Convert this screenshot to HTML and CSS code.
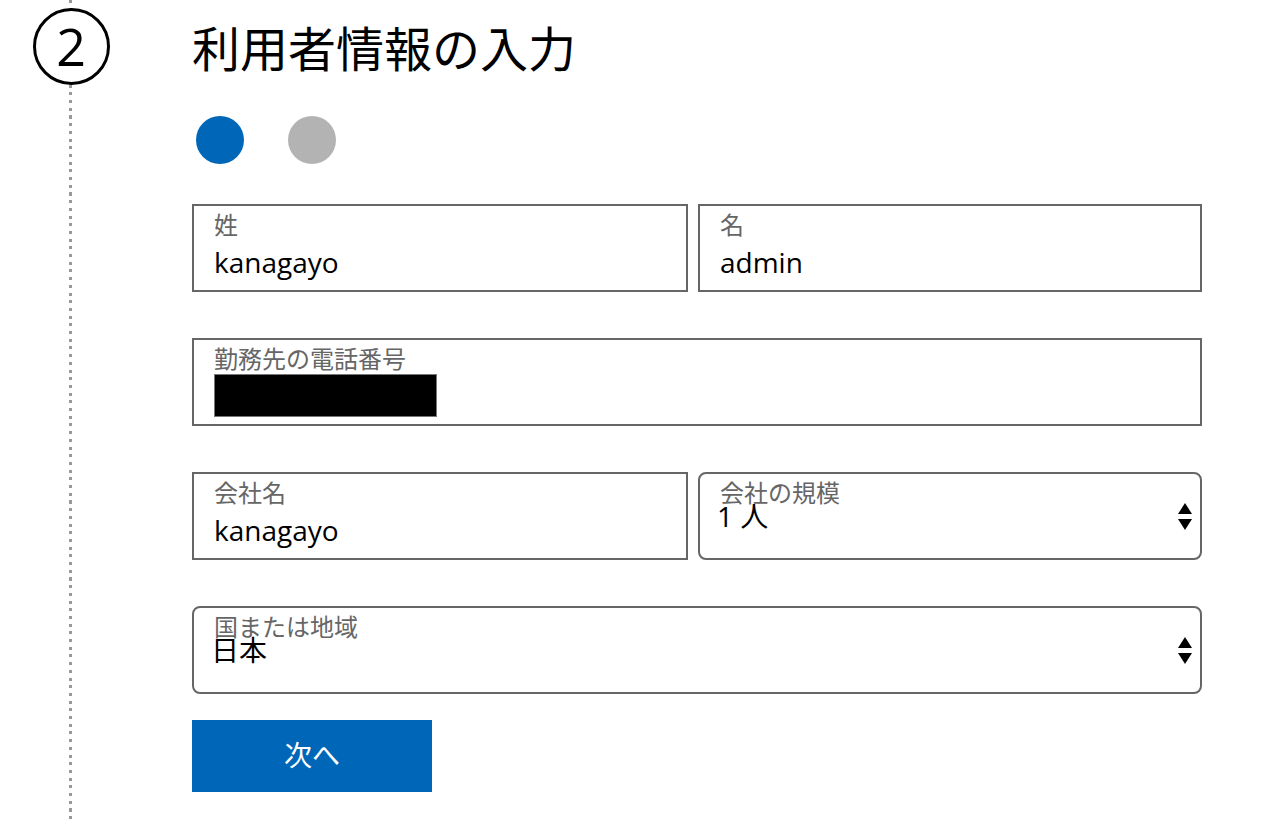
FILE: index.html
```html
<!DOCTYPE html>
<html lang="ja">
<head>
<meta charset="utf-8">
<title>利用者情報の入力</title>
<link rel="stylesheet" href="styles.css">
</head>
<body>
<div class="page">
  <div class="rail">
    <div class="step">2</div>
  </div>
  <main class="content">
    <h1 class="title">利用者情報の入力</h1>
    <div class="dots">
      <span class="dot dot-active"></span>
      <span class="dot"></span>
    </div>
    <form class="form">
      <div class="row row-split">
        <div class="field">
          <div class="label">姓</div>
          <div class="value">kanagayo</div>
        </div>
        <div class="field">
          <div class="label">名</div>
          <div class="value">admin</div>
        </div>
      </div>
      <div class="row">
        <div class="field">
          <div class="label">勤務先の電話番号</div>
          <div class="redacted"></div>
        </div>
      </div>
      <div class="row row-split">
        <div class="field">
          <div class="label">会社名</div>
          <div class="value">kanagayo</div>
        </div>
        <div class="field field-select">
          <div class="select-body">
            <div class="label">会社の規模</div>
            <div class="value select-value">1 人</div>
          </div>
          <svg class="spinner" width="14" height="27" viewBox="0 0 14 27" aria-hidden="true">
            <polygon points="0,11 7,0 14,11" fill="#000"/>
            <polygon points="0,16 14,16 7,27" fill="#000"/>
          </svg>
        </div>
      </div>
      <div class="row">
        <div class="field field-select">
          <div class="select-body">
            <div class="label">国または地域</div>
            <div class="value select-value">日本</div>
          </div>
          <svg class="spinner" width="14" height="27" viewBox="0 0 14 27" aria-hidden="true">
            <polygon points="0,11 7,0 14,11" fill="#000"/>
            <polygon points="0,16 14,16 7,27" fill="#000"/>
          </svg>
        </div>
      </div>
      <button type="button" class="next">次へ</button>
    </form>
  </main>
</div>
</body>
</html>
```

FILE: styles.css
```css
html, body {
  margin: 0;
  padding: 0;
  background: #fff;
}

body {
  font-family: "Open Sans", "Noto Sans CJK JP", sans-serif;
  color: #000;
  height: 822px;
  overflow: hidden;
}

.page {
  display: flex;
  min-height: 822px;
}

.rail {
  width: 142px;
  flex: none;
  padding-top: 8px;
  box-sizing: border-box;
  display: flex;
  flex-direction: column;
  align-items: center;
  background-image: repeating-linear-gradient(to bottom, #999 0 3px, transparent 3px 7.7px);
  background-size: 3px 100%;
  background-repeat: no-repeat;
  background-position: 69px 0;
}

.step {
  width: 77px;
  height: 77px;
  box-sizing: border-box;
  border: 3px solid #000;
  border-radius: 50%;
  background: #fff;
  display: flex;
  align-items: center;
  justify-content: center;
  font-size: 52px;
  line-height: 1;
  font-weight: 400;
  padding-bottom: 2px;
}

.content {
  margin-left: 50px;
  width: 1010px;
  padding-top: 18px;
}

.title {
  margin: 0;
  font-family: "Noto Sans CJK JP", sans-serif;
  font-size: 48px;
  line-height: 56px;
  font-weight: 400;
  letter-spacing: 0;
}

.dots {
  display: flex;
  gap: 44px;
  margin-top: 42px;
  padding-left: 4px;
}

.dot {
  width: 48px;
  height: 48px;
  border-radius: 50%;
  background: #b3b3b3;
}

.dot-active {
  background: #0067b8;
}

.form {
  margin-top: 40px;
  display: flex;
  flex-direction: column;
  gap: 46px;
}

.row {
  display: grid;
  grid-template-columns: 1fr;
}

.row-split {
  grid-template-columns: 496px 1fr;
  gap: 10px;
}

.field {
  height: 88px;
  box-sizing: border-box;
  border: 2px solid #666;
  padding: 4px 20px 0 20px;
}

.label {
  font-size: 24px;
  line-height: 30px;
  color: #666;
  white-space: nowrap;
}

.value {
  margin-top: 4px;
  font-size: 28px;
  line-height: 36px;
  color: #000;
}

.redacted {
  width: 223px;
  height: 43px;
  background: #000;
  border: 1px solid #777;
  box-sizing: border-box;
}

.field-select {
  border-radius: 8px;
  display: flex;
  align-items: flex-start;
  padding-right: 8px;
}

.select-body {
  flex: 1;
}

.select-value {
  margin-top: -10px;
  margin-left: -3px;
}

.spinner {
  flex: none;
  align-self: center;
  margin-top: -4px;
}

.form .next {
  margin-top: -20px;
  width: 240px;
  height: 72px;
  border: 0;
  border-radius: 0;
  background: #0067b8;
  color: #fff;
  font-family: "Noto Sans CJK JP", sans-serif;
  font-size: 28px;
  line-height: 36px;
  padding: 0 0 4px 0;
  cursor: pointer;
}
```
